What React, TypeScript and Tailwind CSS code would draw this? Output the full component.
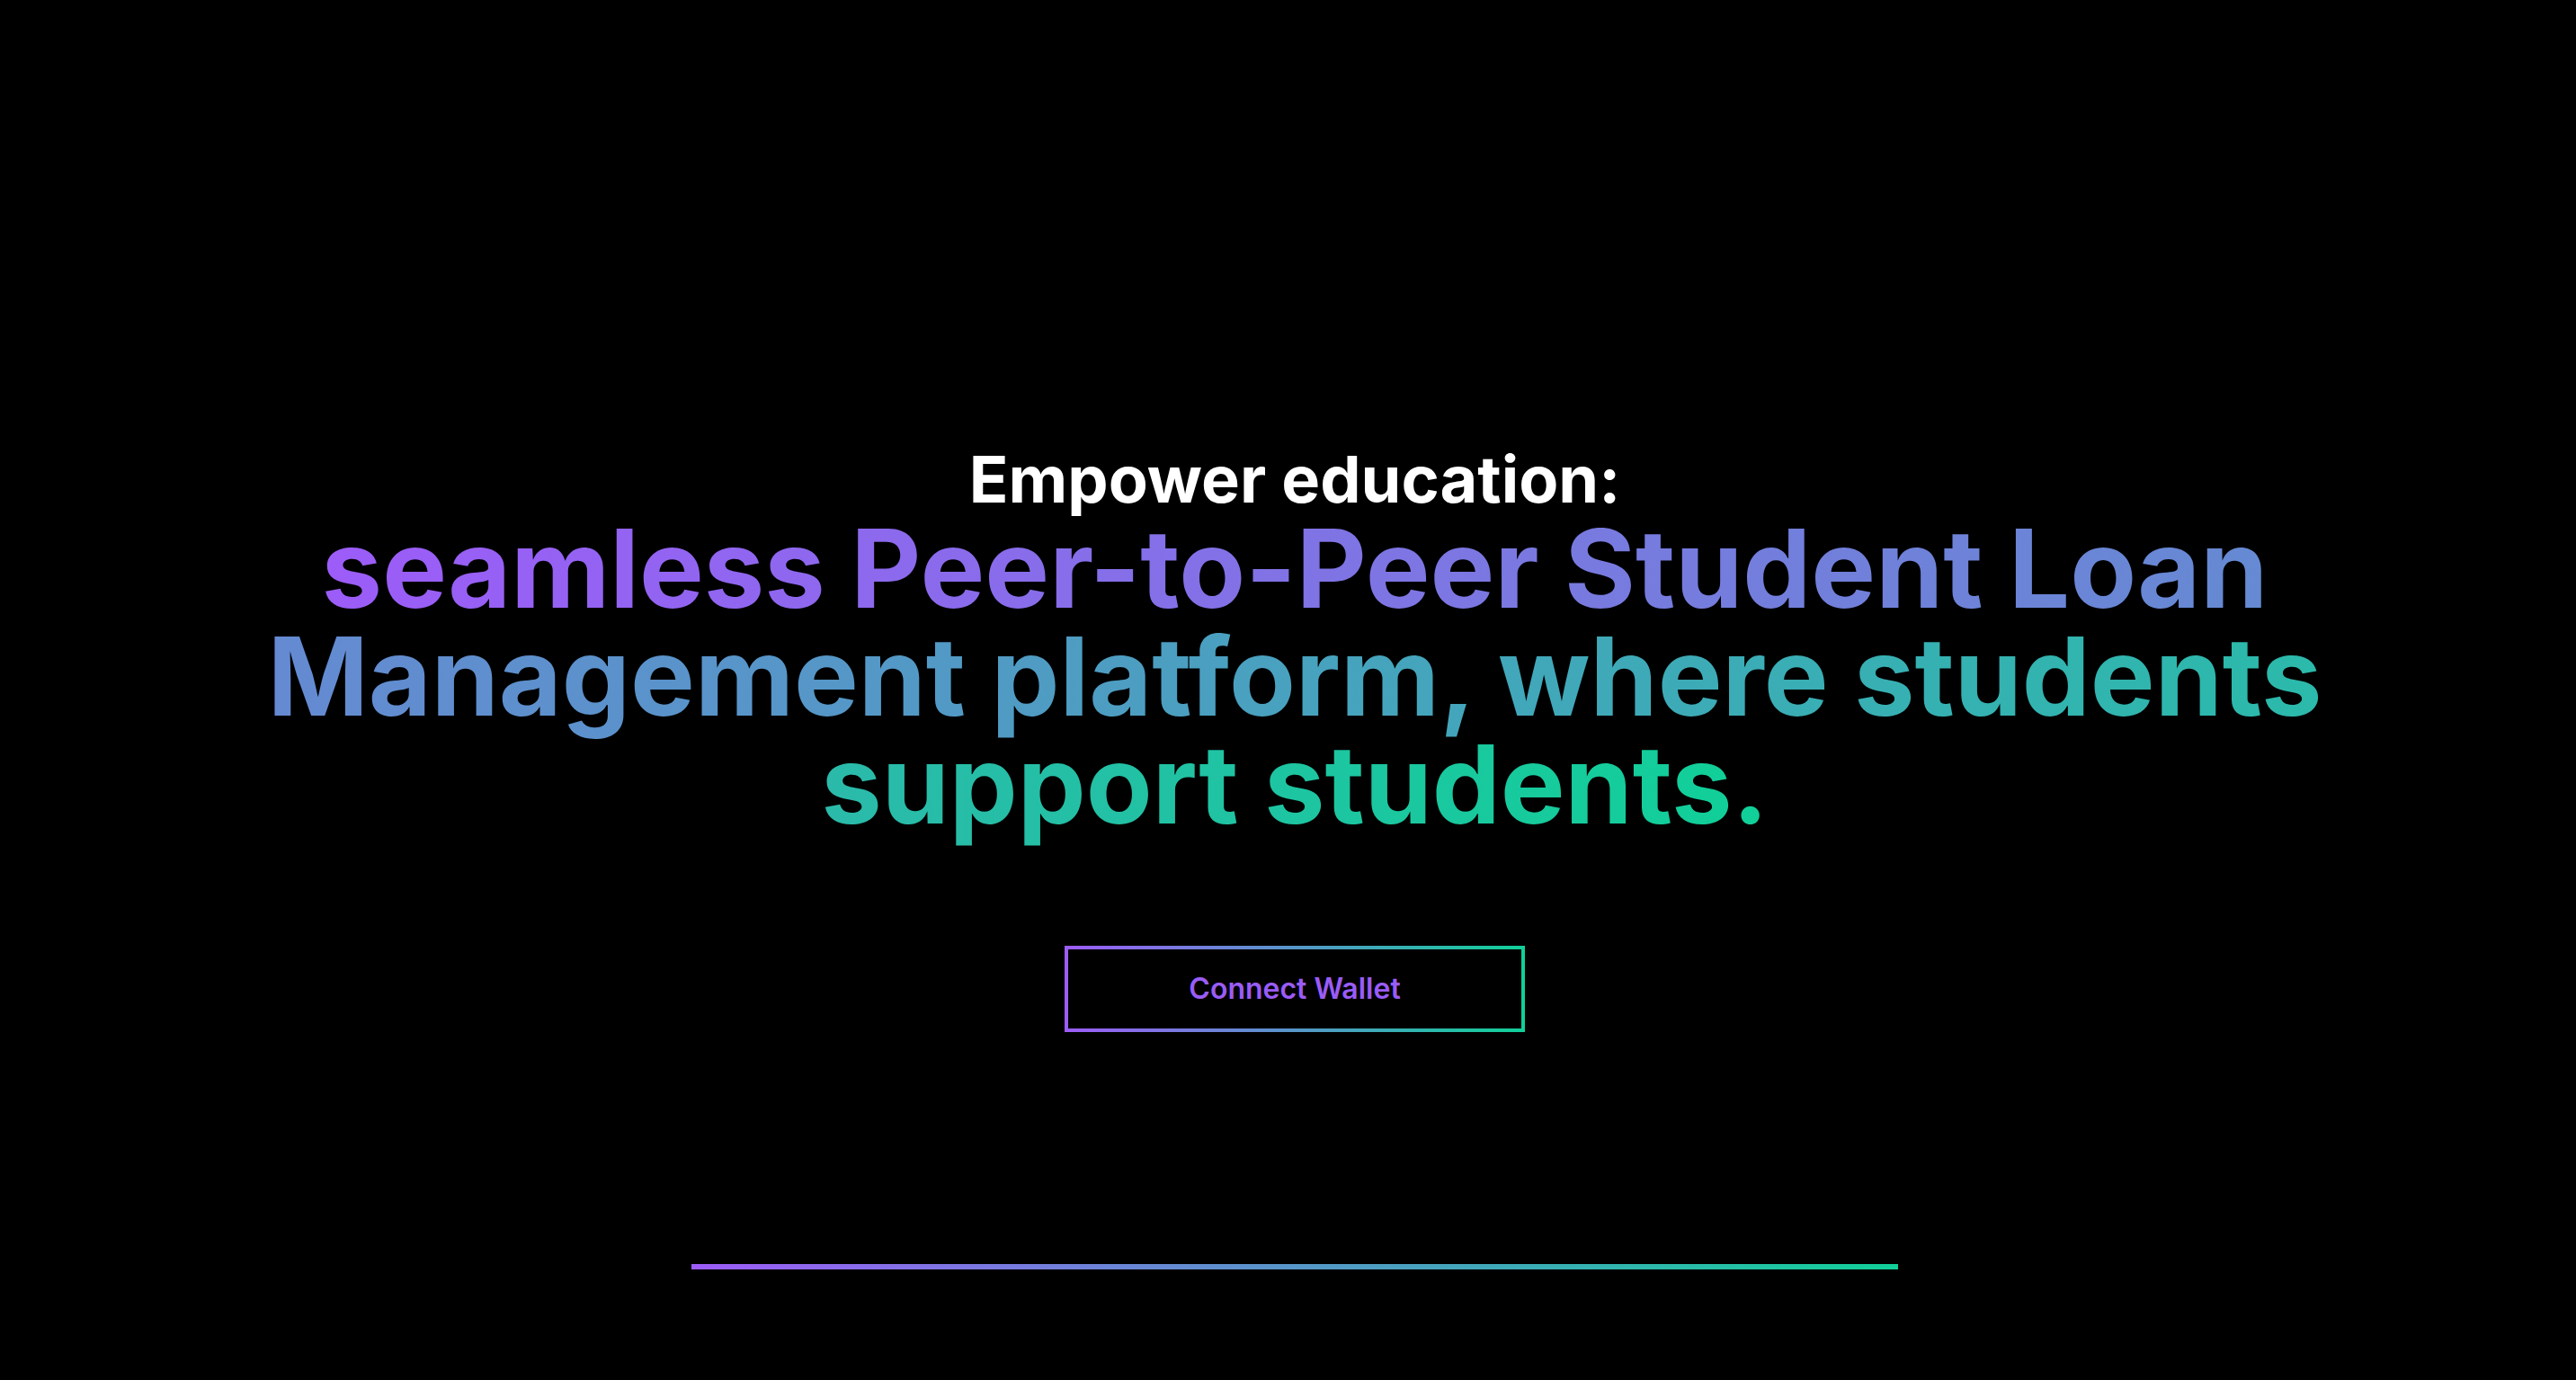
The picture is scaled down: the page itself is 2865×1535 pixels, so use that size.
export default function App() {
  return (
    <main
      className="min-h-screen w-full bg-black flex flex-col items-center pl-[15px] pt-[497px]"
      style={{ fontFamily: "Inter, 'Noto Sans', sans-serif" }}
    >
      {/* Eyebrow heading */}
      <h2 className="text-[72px] leading-none font-bold text-white">Empower education:</h2>

      {/* Gradient headline */}
      <h1 className="mt-[3px] text-center text-[120.6px] leading-[120px] font-bold">
        <span className="bg-[linear-gradient(to_right,#9c5cf8,#10d098)] bg-clip-text text-transparent">
          seamless Peer-to-Peer Student Loan
          <br />
          Management platform, where students
          <br />
          support students.
        </span>
      </h1>

      {/* Connect button */}
      <div className="mt-[120px] p-[4px] bg-[linear-gradient(to_right,#9c5cf8,#10d098)]">
        <button className="w-[504px] h-[88px] bg-black flex items-center justify-center text-[32px] font-semibold text-[#9a5cf7]">
          Connect Wallet
        </button>
      </div>

      {/* Divider */}
      <div className="mt-[258px] w-[1342px] h-[6px] bg-[linear-gradient(to_right,#9c5cf8,#10d098)]" />
    </main>
  );
}
